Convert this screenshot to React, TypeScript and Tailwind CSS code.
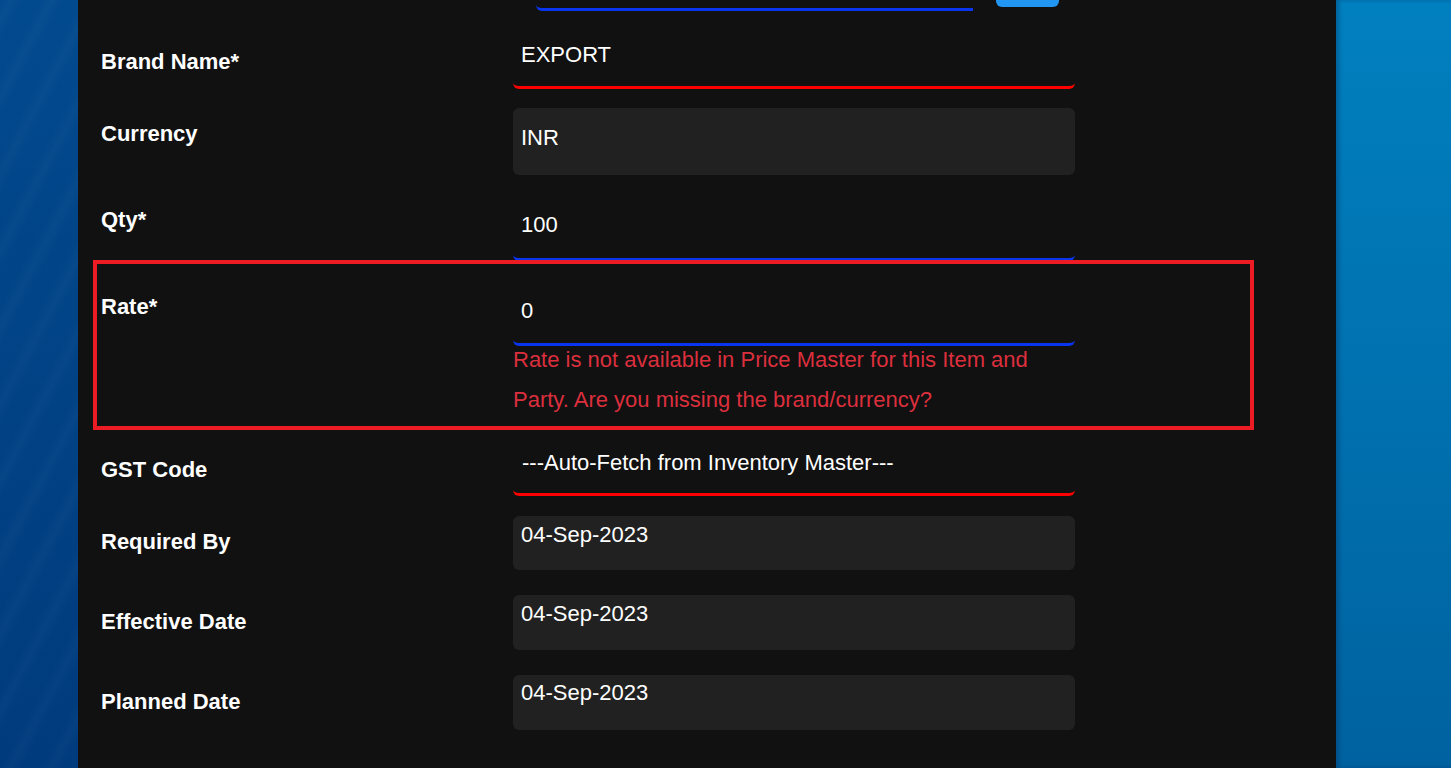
import React from "react";

const font = { fontFamily: '"Liberation Sans", Arial, Helvetica, sans-serif' };

function Label({ text, pt }: { text: string; pt: string }) {
  return (
    <div className={`w-[435px] shrink-0 pl-[23px] text-[22px] leading-[25px] font-bold text-white ${pt}`}>
      {text}
    </div>
  );
}

export default function App() {
  return (
    <div style={font} className="flex h-[768px] w-[1451px] overflow-hidden">
      <div className="w-[78px] shrink-0 bg-[repeating-linear-gradient(118deg,rgba(255,255,255,0)_0px,rgba(255,255,255,0.025)_10px,rgba(255,255,255,0)_20px,rgba(255,255,255,0)_36px),linear-gradient(to_bottom,#024a8e,#003b7d)]" />
      <div className="w-[1258px] shrink-0 bg-[#111111] flex flex-col">
        {/* partial previous row */}
        <div className="flex h-[11px] items-start">
          <div className="w-[458px] shrink-0" />
          <div className="w-[437px] h-[11px] border-b-[3px] border-[#0a35f0] rounded-bl-md" />
          <div className="ml-[23px] w-[63px] h-[7px] bg-[#2196f3] rounded-b-md" />
        </div>

        {/* Brand Name */}
        <div className="flex items-start">
          <Label text="Brand Name*" pt="pt-[38px]" />
          <div className="w-[562px] h-[78px] pt-[31px] pl-[8px] text-[22px] leading-[25px] text-white border-b-[3px] border-[#ff0000] rounded-md">
            EXPORT
          </div>
        </div>

        {/* Currency */}
        <div className="flex items-start mt-[19px]">
          <Label text="Currency" pt="pt-[13px]" />
          <div className="w-[562px] h-[67px] pt-[17px] pl-[8px] text-[22px] leading-[25px] text-white bg-[#212121] rounded-md">
            INR
          </div>
        </div>

        {/* Qty */}
        <div className="flex items-start">
          <Label text="Qty*" pt="pt-[32px]" />
          <div className="w-[562px] h-[86px] pt-[37px] pl-[8px] text-[22px] leading-[25px] text-white border-b-[3px] border-[#0a35f0] rounded-md">
            100
          </div>
        </div>

        {/* Rate */}
        <div className="relative flex items-start">
          <Label text="Rate*" pt="pt-[33px]" />
          <div className="w-[562px] flex flex-col">
            <div className="h-[85px] pt-[37px] pl-[8px] text-[22px] leading-[25px] text-white border-b-[3px] border-[#0a35f0] rounded-md">
              0
            </div>
            <div className="-mt-[6px] text-[22px] leading-[40px] text-[#dc2f3d]">
              Rate is not available in Price Master for this Item and Party. Are you missing the brand/currency?
            </div>
          </div>
          <div className="absolute top-[-1px] left-[15px] w-[1161px] h-[170px] border-4 border-[#ed1c24] pointer-events-none" />
        </div>

        {/* GST Code */}
        <div className="flex items-start -mt-[3px]">
          <Label text="GST Code" pt="pt-[40px]" />
          <div className="w-[562px] h-[79px] pt-[33px] pl-[9px] text-[22px] leading-[25px] text-white border-b-[3px] border-[#ff0000] rounded-md">
            ---Auto-Fetch from Inventory Master---
          </div>
        </div>

        {/* Required By */}
        <div className="flex items-start mt-[20px]">
          <Label text="Required By" pt="pt-[13px]" />
          <div className="w-[562px] h-[54px] pt-[6px] pl-[8px] text-[22px] leading-[25px] text-white bg-[#212121] rounded-md">
            04-Sep-2023
          </div>
        </div>

        {/* Effective Date */}
        <div className="flex items-start mt-[25px]">
          <Label text="Effective Date" pt="pt-[14px]" />
          <div className="w-[562px] h-[55px] pt-[6px] pl-[8px] text-[22px] leading-[25px] text-white bg-[#212121] rounded-md">
            04-Sep-2023
          </div>
        </div>

        {/* Planned Date */}
        <div className="flex items-start mt-[25px]">
          <Label text="Planned Date" pt="pt-[14px]" />
          <div className="w-[562px] h-[55px] pt-[5px] pl-[8px] text-[22px] leading-[25px] text-white bg-[#212121] rounded-md">
            04-Sep-2023
          </div>
        </div>
      </div>
      <div className="flex-1 bg-[linear-gradient(to_bottom,#0180bf,#0062a0)] shadow-[inset_3px_0_4px_rgba(0,40,90,0.35)]" />
    </div>
  );
}
